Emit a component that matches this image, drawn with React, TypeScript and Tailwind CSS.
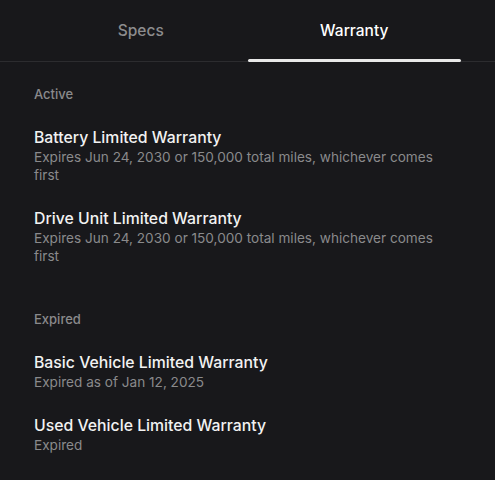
import React from 'react';

interface Warranty {
  title: string;
  detail: string;
}

const active: Warranty[] = [
  {
    title: 'Battery Limited Warranty',
    detail: 'Expires Jun 24, 2030 or 150,000 total miles, whichever comes first',
  },
  {
    title: 'Drive Unit Limited Warranty',
    detail: 'Expires Jun 24, 2030 or 150,000 total miles, whichever comes first',
  },
];

const expired: Warranty[] = [
  { title: 'Basic Vehicle Limited Warranty', detail: 'Expired as of Jan 12, 2025' },
  { title: 'Used Vehicle Limited Warranty', detail: 'Expired' },
];

const Section = ({ label, items }: { label: string; items: Warranty[] }) => (
  <div className="flex flex-col gap-[25px]">
    <div className="text-[13px] leading-[18px] font-medium text-[#8a8a8c]">{label}</div>
    {items.map((w) => (
      <div key={w.title} className="flex flex-col">
        <div className="text-[15.8px] leading-[20px] font-medium text-[#f2f2f2]">{w.title}</div>
        <div className="text-[13.6px] leading-[18px] text-[#8a8a8c] max-w-[410px]">{w.detail}</div>
      </div>
    ))}
  </div>
);

export default function App() {
  return (
    <div
      className="w-[495px] h-[480px] bg-[#18181b] overflow-hidden"
      style={{ fontFamily: 'Inter, "Noto Sans", sans-serif' }}
    >
      {/* Tabs */}
      <div className="border-b border-[#2c2c2f] px-[34px] flex">
        <div className="flex-1 h-[61px] flex items-center justify-center text-[15.5px] font-medium text-[#8c8c8e]">
          Specs
        </div>
        <div className="flex-1 h-[61px] flex items-center justify-center text-[15.5px] font-medium text-white relative">
          Warranty
          <div className="absolute left-0 right-0 -bottom-px h-[3px] bg-[#e8e8e8] rounded-full" />
        </div>
      </div>

      <div className="px-[34px] pt-[23px] flex flex-col gap-[45px]">
        <Section label="Active" items={active} />
        <Section label="Expired" items={expired} />
      </div>
    </div>
  );
}
